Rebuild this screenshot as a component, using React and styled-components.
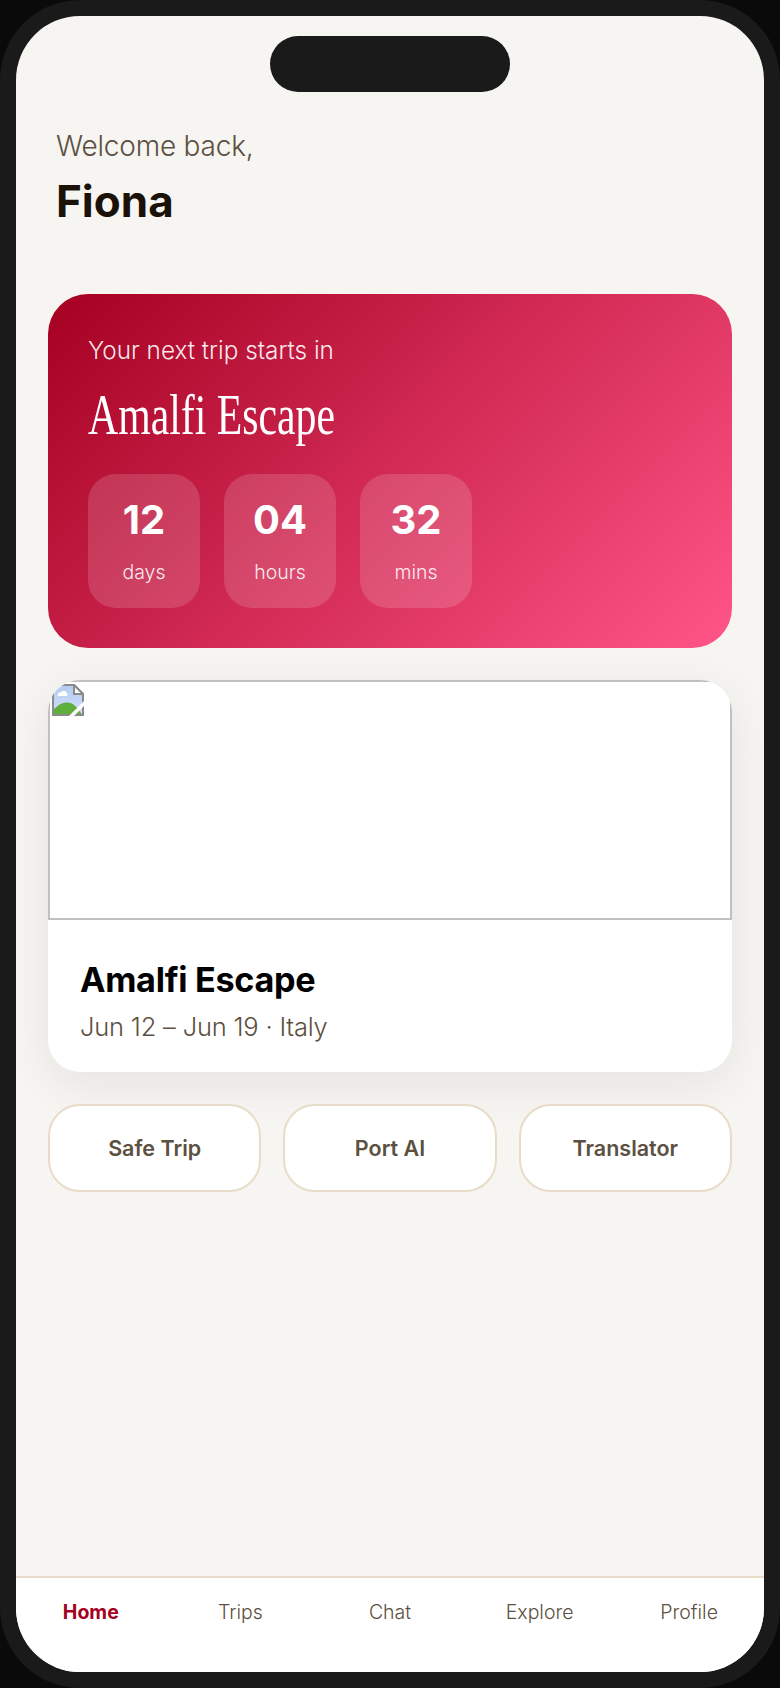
import styled, { createGlobalStyle } from "styled-components";

const GlobalStyle = createGlobalStyle`
  html, body {
    margin: 0;
    padding: 0;
    background: #0a0a0a;
  }
  * { box-sizing: border-box; }
`;

const Phone = styled.div`
  width: 780px;
  height: 1688px;
  padding: 16px;
  border-radius: 80px;
  background: #1a1a1a;
`;

const Screen = styled.div`
  position: relative;
  display: flex;
  flex-direction: column;
  width: 748px;
  height: 1656px;
  border-radius: 64px;
  overflow: hidden;
  background: #f7f5f2;
  font-family: "Inter", "Liberation Sans", sans-serif;
`;

const Notch = styled.div`
  position: absolute;
  top: 20px;
  left: 254px;
  width: 240px;
  height: 56px;
  border-radius: 28px;
  background: #1a1a1a;
`;

const Header = styled.header`
  padding: 112px 40px 67px;
`;

const Welcome = styled.div`
  font-size: 28px;
  line-height: 36px;
  font-weight: 300;
  letter-spacing: -0.2px;
  color: #5c5040;
`;

const Name = styled.div`
  margin-top: 11px;
  font-size: 44px;
  line-height: 52px;
  font-weight: 700;
  color: #1a1208;
`;

const Main = styled.main`
  flex: 1;
  display: flex;
  flex-direction: column;
  gap: 32px;
  padding: 0 32px;
`;

const Hero = styled.section`
  height: 354px;
  padding: 40px;
  border-radius: 40px;
  background: linear-gradient(135deg, #a50021 0%, #ff5588 100%);
  color: #fff;
`;

const HeroLabel = styled.div`
  font-size: 24.3px;
  line-height: 32px;
  font-weight: 300;
  color: rgba(255, 255, 255, 0.92);
`;

const HeroTitle = styled.div`
  margin-top: 17px;
  width: max-content;
  font-family: "Liberation Serif", serif;
  font-size: 58px;
  line-height: 64px;
  transform: scaleX(0.72);
  transform-origin: left center;
`;

const Countdown = styled.div`
  display: flex;
  gap: 24px;
  margin-top: 27px;
`;

const TimeBox = styled.div`
  display: flex;
  flex-direction: column;
  align-items: center;
  width: 112px;
  height: 134px;
  padding-top: 24px;
  border-radius: 28px;
  background: rgba(255, 255, 255, 0.15);
`;

const TimeValue = styled.div`
  font-size: 40px;
  line-height: 44px;
  font-weight: 700;
`;

const TimeLabel = styled.div`
  margin-top: 16px;
  font-size: 19.5px;
  line-height: 28px;
  font-weight: 300;
  color: rgba(255, 255, 255, 0.9);
`;

const TripCard = styled.section`
  height: 392px;
  border-radius: 32px;
  overflow: hidden;
  background: #fff;
  box-shadow: 0 12px 48px rgba(26, 18, 8, 0.08);
`;

const BrokenImage = styled.div`
  height: 240px;
  padding: 2px;
  border: 2px solid #c0c0c0;
`;

const TripBody = styled.div`
  padding: 39px 32px 0;
`;

const TripTitle = styled.div`
  font-size: 34.2px;
  line-height: 42px;
  font-weight: 700;
  letter-spacing: -0.3px;
  color: #000;
`;

const TripMeta = styled.div`
  margin-top: 8px;
  font-size: 25.5px;
  line-height: 36px;
  font-weight: 300;
  letter-spacing: -0.2px;
  color: #5c5040;
`;

const Actions = styled.div`
  display: flex;
  gap: 22px;
`;

const ActionButton = styled.div`
  flex: 1 1 0;
  display: flex;
  align-items: center;
  justify-content: center;
  height: 88px;
  border: 2px solid #e8dcc8;
  border-radius: 32px;
  background: #fff;
  font-size: 21.5px;
  font-weight: 600;
  color: #5c5040;
`;

const Nav = styled.nav`
  display: flex;
  height: 96px;
  padding-bottom: 26px;
  border-top: 2px solid #e8dcc8;
  background: #fff;
`;

const NavItem = styled.div`
  flex: 1 1 0;
  display: flex;
  align-items: center;
  justify-content: center;
  font-size: 19.5px;
  font-weight: ${p => (p.$active ? 700 : 300)};
  color: ${p => (p.$active ? "#a50021" : "#5c5040")};
`;

function BrokenImageIcon() {
  return (
    <svg width="32" height="32" viewBox="0 0 16 16" style={{ display: "block" }}>
      <defs>
        <linearGradient id="sky" x1="0" y1="0" x2="0" y2="1">
          <stop offset="0" stopColor="#b4cbf3" />
          <stop offset="1" stopColor="#d4e0f8" />
        </linearGradient>
      </defs>
      <path d="M0.5 0.5H11L15.5 5V15.5H0.5Z" fill="url(#sky)" stroke="#8a8a8a" strokeWidth="1" />
      <path d="M11 0.5V5H15.5Z" fill="#fff" stroke="#8a8a8a" strokeWidth="1" />
      <path d="M3 6C2.6 5 3.6 4 4.6 4.2C5.2 3 7 3.2 7.2 4.4C8 4.6 8 6 7.2 6Z" fill="#fff" />
      <path d="M1 15V12.5C3 10.5 5 9.2 7.5 9.2C10.5 9.2 12.5 11.5 14.8 15Z" fill="#5fae3c" />
      <path d="M8 16.5L16 8.5V11L10.5 16.5Z" fill="#fff" />
    </svg>
  );
}

const countdown = [
  { value: "12", label: "days" },
  { value: "04", label: "hours" },
  { value: "32", label: "mins" },
];

const actions = ["Safe Trip", "Port AI", "Translator"];
const tabs = ["Home", "Trips", "Chat", "Explore", "Profile"];

export default function App() {
  return (
    <Phone>
      <GlobalStyle />
      <Screen>
        <Notch />
        <Header>
          <Welcome>Welcome back,</Welcome>
          <Name>Fiona</Name>
        </Header>
        <Main>
          <Hero>
            <HeroLabel>Your next trip starts in</HeroLabel>
            <HeroTitle>Amalfi Escape</HeroTitle>
            <Countdown>
              {countdown.map(item => (
                <TimeBox key={item.label}>
                  <TimeValue>{item.value}</TimeValue>
                  <TimeLabel>{item.label}</TimeLabel>
                </TimeBox>
              ))}
            </Countdown>
          </Hero>
          <TripCard>
            <BrokenImage>
              <BrokenImageIcon />
            </BrokenImage>
            <TripBody>
              <TripTitle>Amalfi Escape</TripTitle>
              <TripMeta>Jun 12 – Jun 19 · Italy</TripMeta>
            </TripBody>
          </TripCard>
          <Actions>
            {actions.map(label => (
              <ActionButton key={label}>{label}</ActionButton>
            ))}
          </Actions>
        </Main>
        <Nav>
          {tabs.map((tab, i) => (
            <NavItem key={tab} $active={i === 0}>{tab}</NavItem>
          ))}
        </Nav>
      </Screen>
    </Phone>
  );
}
